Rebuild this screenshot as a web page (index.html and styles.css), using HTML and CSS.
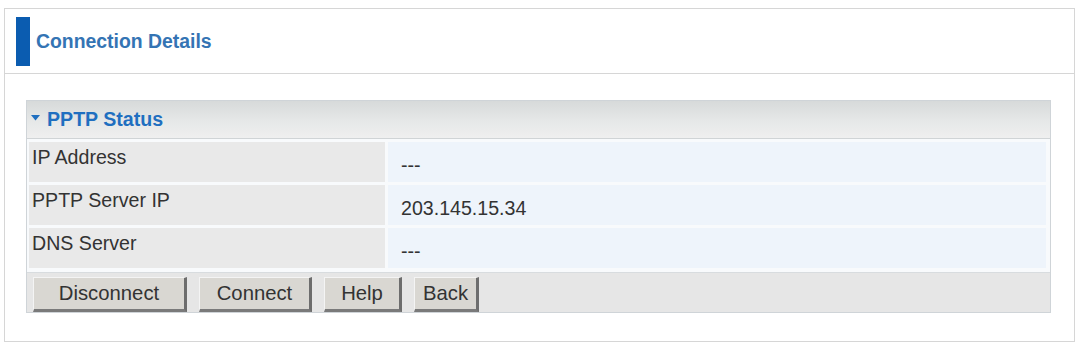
FILE: index.html
```html
<!DOCTYPE html>
<html>
<head>
<meta charset="utf-8">
<link rel="stylesheet" href="styles.css">
</head>
<body>
<div class="outer">
  <div class="titlebar">
    <span class="titlemark"></span>
    <span class="title">Connection Details</span>
  </div>
  <div class="content">
    <div class="panel">
      <div class="panel-head">
        <svg class="tri" width="9" height="6" viewBox="0 0 9 6"><polygon points="0,0 9,0 4.5,5.5" fill="#1f6fc0"/></svg>
        <span class="panel-title">PPTP Status</span>
      </div>
      <div class="rows">
        <div class="label">IP Address</div>
        <div class="value">---</div>
        <div class="label">PPTP Server IP</div>
        <div class="value">203.145.15.34</div>
        <div class="label">DNS Server</div>
        <div class="value">---</div>
      </div>
      <div class="btnbar">
        <button class="btn btn-disconnect">Disconnect</button>
        <button class="btn btn-connect">Connect</button>
        <button class="btn btn-help">Help</button>
        <button class="btn btn-back">Back</button>
      </div>
    </div>
  </div>
</div>
</body>
</html>
```

FILE: styles.css
```css
html, body {
  margin: 0;
  padding: 0;
  background: #ffffff;
  font-family: "Liberation Sans", Arial, sans-serif;
}

.outer {
  margin: 8px 1px 0 4px;
  border: 1px solid #d6d6d6;
  height: 334px;
  box-sizing: border-box;
}

.titlebar {
  height: 64px;
  border-bottom: 1px solid #d6d6d6;
  display: flex;
  align-items: center;
  padding-left: 11px;
  gap: 6px;
}

.titlemark {
  display: block;
  width: 14px;
  height: 49px;
  background: #0b5cb0;
}

.title {
  font-weight: bold;
  font-size: 19.4px;
  color: #3474b4;
}

.content {
  padding: 26px 23px 0 21px;
}

.panel {
  border: 1px solid #cfd4d8;
  background: #f8fafc;
}

.panel-head {
  height: 37px;
  display: flex;
  align-items: center;
  padding-left: 4px;
  background: linear-gradient(#d7dada, #e6e8e8 55%, #efefef);
  border-bottom: 1px solid #d0d4d6;
}

.tri {
  margin-right: 7px;
  margin-top: -3px;
}

.panel-title {
  font-weight: bold;
  font-size: 19.6px;
  color: #1f6fc0;
}

.rows {
  display: grid;
  grid-template-columns: 356px 1fr;
  grid-auto-rows: 40px;
  gap: 3px;
  padding: 3px 4px 4px 2px;
}

.label {
  background: #e9e9e9;
  font-size: 19.6px;
  color: #333333;
  padding: 4px 0 0 3px;
  line-height: 23px;
}

.value {
  background: #eef4fb;
  font-size: 19.6px;
  color: #333333;
  padding-left: 13px;
  display: flex;
  align-items: center;
  padding-top: 6px;
}

.btnbar {
  background: #e6e6e6;
  border-top: 1px solid #d8dcdf;
  height: 39px;
  display: flex;
  align-items: center;
  padding-left: 6px;
  gap: 12px;
}

.btn {
  height: 35px;
  font-family: "Liberation Sans", Arial, sans-serif;
  font-size: 20.3px;
  color: #333333;
  background: #d9d7d2;
  border-style: solid;
  border-width: 1px 3px 3px 1px;
  border-color: #f4f4f4 #6d6d6d #7a7a7a #f4f4f4;
  padding: 0;
  margin-top: 3px;
}

.btn-disconnect { width: 154px; }
.btn-connect { width: 113px; }
.btn-help { width: 78px; }
.btn-back { width: 65px; }
```
